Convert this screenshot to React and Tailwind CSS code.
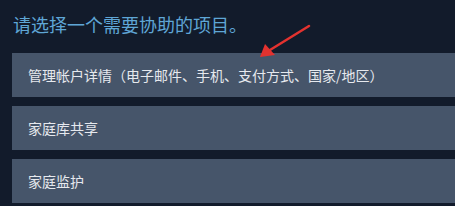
import React from 'react';

const items = [
  '管理帐户详情（电子邮件、手机、支付方式、国家/地区）',
  '家庭库共享',
  '家庭监护',
];

const App = () => {
  return (
    <div
      className="relative w-[455px] h-[206px] overflow-hidden bg-[#121b2b] pl-3"
      style={{ fontFamily: '"Noto Sans CJK SC", "Noto Sans", sans-serif' }}
    >
      <h2 className="pt-[11px] pl-[1px] text-[18px] leading-[27px] text-[#5fa6d6]">
        请选择一个需要协助的项目。
      </h2>
      <div className="mt-[15px] flex flex-col gap-[9px]">
        {items.map((label) => (
          <div
            key={label}
            className="h-[44px] w-[460px] bg-[#46556a] pl-4 flex items-center text-[14px] text-[#e6e9ee]"
          >
            {label}
          </div>
        ))}
      </div>

      {/* red annotation arrow */}
      <svg className="absolute left-0 top-0" width="455" height="206" viewBox="0 0 455 206">
        <line x1="309" y1="26" x2="270" y2="50" stroke="#e3322f" strokeWidth="2.5" strokeLinecap="round" />
        <polygon points="260,57 265,44 275,55" fill="#e3322f" />
      </svg>
    </div>
  );
};

export default App;
